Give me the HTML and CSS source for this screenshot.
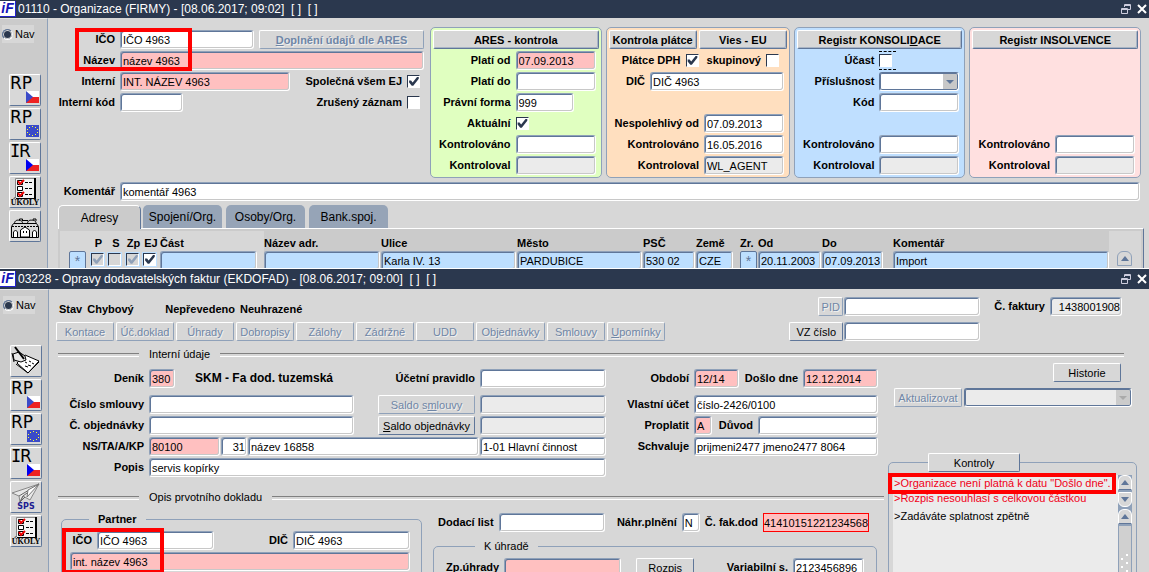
FILE: index.html
```html
<!DOCTYPE html>
<html lang="cs">
  <head>
    <meta charset="UTF-8" />
    <meta name="viewport" content="width=device-width, initial-scale=1.0" />
    <title>Organizace</title>
    <link rel="stylesheet" href="styles.css">
  </head>
  <body>

    <!-- shared icons -->
    <svg class="defs" width="0" height="0">
      <symbol id="flag" viewBox="0 0 13 12">
        <path d="M0 0h13v6H0z" fill="#fff"/>
        <path d="M0 6h13v6H0z" fill="#e22"/>
        <path d="M0 0l7 6-7 6z" fill="currentColor"/>
      </symbol>
      <symbol id="eu" viewBox="0 0 13 12">
        <path d="M0 0h13v12H0z" fill="#3b4bc8"/>
        <path d="M6 1h1v1H6zM9 2h1v1H9zM11 4h1v1h-1zM11 7h1v1h-1zM9 9h1v1H9zM6 10h1v1H6zM3 9h1v1H3zM1 7h1v1H1zM1 4h1v1H1zM3 2h1v1H3z" fill="#ff3"/>
      </symbol>
      <symbol id="list" viewBox="0 0 30 30">
        <path d="M6 1h19v21H6z" fill="#f4f4f4"/>
        <path d="M5.500 21V1.500H25" fill="none" stroke="#888"/>
        <path d="M24 1h2v21H6v-1h18z" fill="#000"/>
        <path d="M7.500 3.500h5v4h-5zM7.500 9.500h5v4h-5zM7.500 15.500h5v4h-5z" fill="#fff" stroke="#000"/>
        <path d="M15 5.500h8M15 11.500h8M15 17.500h8" stroke="#000" stroke-dasharray="3 1"/>
        <path d="M8 4l2 3 4-4M8 16l2 3 4-4" fill="none" stroke="#e00" stroke-width="2"/>
      </symbol>
      <symbol id="town" viewBox="0 0 30 30">
        <path d="M1.500 26.500v-11l2-3h23l2 3v11z" fill="#d8d8d8" stroke="#000"/>
        <path d="M2 15.500h26" stroke="#000" stroke-dasharray="2 1"/>
        <path d="M4.500 12.500c0-3 3-4 5-3M12.500 12.500c0-3-2-3-3-3V8h3v2M17.500 12.500c0-3 3-4 5-3M26 12.500c0-3-2-3-3-3V8h3v2" fill="none" stroke="#000"/>
        <path d="M12 9.500h6" stroke="#000"/>
        <path d="M10.500 26v-7l4.500-3 4.500 3v7z" fill="#fff" stroke="#000"/>
        <path d="M3.500 26v-5l2-2 2 2v5M22.500 26v-5l2-2 2 2v5" fill="#fff" stroke="#000"/>
        <path d="M13 20h1v2h-1zM16 20h1v2h-1zM2 26h26v1H2z"/>
      </symbol>
      <symbol id="note" viewBox="0 0 30 30">
        <path d="M6 17l8-8 14 6-11 12z" fill="#fff" stroke="#000"/>
        <path d="M5 18l12 9 11-11" fill="none" stroke="#000"/>
        <path d="M2 8l6-2 6 4 1 4-5 2-7-2z" fill="#e8e8e8" stroke="#000"/>
        <path d="M4 1l9 12" stroke="#000" stroke-width="2"/>
        <path d="M14 16l2 1M18 15l2 1M17 19l3 1M21 17l2 1M14 20l3 1M1 7l2 9" stroke="#000"/>
      </symbol>
      <symbol id="plane" viewBox="0 0 30 30">
        <path d="M1 11L28 2 19 18l-7-4-3 6-1-6z" fill="#e8e8e8" stroke="#888"/>
        <path d="M28 2L8 14M28 2L12 14l-3 6 5-5" fill="none" stroke="#666"/>
        <path d="M17 8l11-6-12 13z" fill="#fff" stroke="#777"/>
      </symbol>
      <symbol id="restore" viewBox="0 0 10 10">
        <path d="M3.500 3V.500h6v5H7M3 1.500h7" fill="none" stroke="#ccd"/>
        <path d="M.500 4.500h6v5h-6zM0 5.500h7" fill="none" stroke="#ccd"/>
      </symbol>
      <symbol id="close" viewBox="0 0 10 10">
        <path d="M1 1l8 8M9 1L1 9" stroke="#fff" stroke-width="2"/>
      </symbol>
      <symbol id="up" viewBox="0 0 8 5"><path d="M0 5l4-5 4 5z"/></symbol>
      <symbol id="down" viewBox="0 0 8 5"><path d="M0 0l4 5 4-5z"/></symbol>
    </svg>

    <section class="window firmy">
      <header class="titlebar">
        <span class="logo">iF</span>
        <h1>01110 - Organizace (FIRMY) - [08.06.2017; 09:02]&nbsp; [ ]&nbsp; [ ]</h1>
        <button class="win-but" aria-label="Obnovit"><svg width="10" height="10"><use href="#restore"/></svg></button>
        <button class="win-but" aria-label="Zavřít"><svg width="10" height="10"><use href="#close"/></svg></button>
      </header>

      <div class="window-body">
        <nav class="sidebar">
          <label class="nav-radio"><input type="radio" checked>Nav</label>
          <div class="tools">
            <button class="tool">RP<svg class="badge soft"><use href="#flag"/></svg></button>
            <button class="tool">RP<svg class="badge"><use href="#eu"/></svg></button>
            <button class="tool"><span class="mono">I</span>R<svg class="badge"><use href="#flag"/></svg></button>
            <button class="tool"><svg class="pic"><use href="#list"/></svg><span class="caption">ÚKOLY</span></button>
            <button class="tool" aria-label="Adresy"><svg class="pic"><use href="#town"/></svg></button>
          </div>
        </nav>

        <main class="content">
          <div class="top">
            <div class="org">
              <div class="row">
                <label for="ico">IČO</label>
                <input class="field w-ico" id="ico" value="IČO 4963">
                <button class="but bold ares" disabled><u>D</u>oplnění údajů dle ARES</button>
              </div>
              <div class="row">
                <label for="nazev">Název</label>
                <input class="field pink grow" id="nazev" value="název 4963">
              </div>
              <div class="row">
                <label for="interni">Interní</label>
                <input class="field pink w-interni" id="interni" value="INT. NÁZEV 4963">
                <label class="side" for="ej">Společná všem EJ</label>
                <input type="checkbox" id="ej" checked>
              </div>
              <div class="row">
                <label for="kod-int">Interní kód</label>
                <input class="field w-kod" id="kod-int">
                <label class="side" for="zruseny">Zrušený záznam</label>
                <input type="checkbox" id="zruseny">
              </div>
              <div class="mark mark-org"></div>
            </div>

            <div class="panels">
              <div class="panel green">
                <div class="heads"><button class="but bold">ARES - kontrola</button></div>
                <div class="pair"><label for="a1">Platí od</label><input class="field pink" id="a1" value="07.09.2013"></div>
                <div class="pair"><label for="a2">Platí do</label><input class="field" id="a2"></div>
                <div class="pair"><label for="a3">Právní forma</label><input class="field short" id="a3" value="999"></div>
                <div class="pair"><label for="a4">Aktuální</label><input type="checkbox" id="a4" checked></div>
                <div class="pair"><label for="a5">Kontrolováno</label><input class="field" id="a5"></div>
                <div class="pair"><label for="a6">Kontroloval</label><input class="field off" id="a6" readonly></div>
              </div>

              <div class="panel orange">
                <div class="heads"><button class="but bold">Kontrola plátce</button><button class="but bold">Vies - EU</button></div>
                <div class="line checks">
                  <label for="b1">Plátce DPH</label><input type="checkbox" id="b1" checked>
                  <label for="b2">skupinový</label><input type="checkbox" id="b2">
                </div>
                <div class="line"><label for="b3">DIČ</label><input class="field w-dic" id="b3" value="DIČ 4963"></div>
                <div class="pair"></div>
                <div class="pair"><label for="b4">Nespolehlivý od</label><input class="field" id="b4" value="07.09.2013"></div>
                <div class="pair"><label for="b5">Kontrolováno</label><input class="field" id="b5" value="16.05.2016"></div>
                <div class="pair"><label for="b6">Kontroloval</label><input class="field off" id="b6" value="WL_AGENT" readonly></div>
              </div>

              <div class="panel blue">
                <div class="heads"><button class="but bold">Registr KONSOLI<u>D</u>ACE</button></div>
                <div class="pair"><label for="c1">Účast</label><span class="focus"><input type="checkbox" id="c1"></span></div>
                <div class="pair"><label for="c2">Příslušnost</label><select class="field" id="c2"><option></option></select></div>
                <div class="pair"><label for="c3">Kód</label><input class="field" id="c3"></div>
                <div class="pair"></div>
                <div class="pair"><label for="c4">Kontrolováno</label><input class="field" id="c4"></div>
                <div class="pair"><label for="c5">Kontroloval</label><input class="field off" id="c5" readonly></div>
              </div>

              <div class="panel rose">
                <div class="heads"><button class="but bold">Registr INSOLVENCE</button></div>
                <div class="pair"></div>
                <div class="pair"></div>
                <div class="pair"></div>
                <div class="pair"></div>
                <div class="pair"><label for="d1">Kontrolováno</label><input class="field" id="d1"></div>
                <div class="pair"><label for="d2">Kontroloval</label><input class="field off" id="d2" readonly></div>
              </div>
            </div>
          </div>

          <div class="row comment">
            <label for="komentar">Komentář</label>
            <input class="field grow" id="komentar" value="komentář 4963">
          </div>

          <div class="tabs">
            <button class="tab active">Adresy</button>
            <button class="tab">Spojení/Org.</button>
            <button class="tab">Osoby/Org.</button>
            <button class="tab">Bank.spoj.</button>
          </div>
          <div class="tab-page">
            <table class="addresses">
              <colgroup>
                <col class="c-star"><col class="c-p"><col class="c-s"><col class="c-p"><col class="c-s"><col class="c-cast">
                <col class="c-nazev"><col class="c-ulice"><col class="c-mesto"><col class="c-psc"><col class="c-zeme">
                <col class="c-zr"><col class="c-od"><col class="c-do"><col>
              </colgroup>
              <thead>
                <tr>
                  <th class="lite"></th><th class="lite mid">P</th><th class="lite mid">S</th><th class="lite mid">Zp</th><th class="lite mid">EJ</th><th class="lite">Část</th>
                  <th>Název adr.</th><th>Ulice</th><th>Město</th><th>PSČ</th><th>Země</th><th>Zr.</th><th>Od</th><th>Do</th><th>Komentář</th>
                </tr>
              </thead>
              <tbody>
                <tr>
                  <td class="lite star"><button class="but row-but">*</button></td>
                  <td class="lite"><span class="tick"><input type="checkbox" aria-label="P" checked disabled></span></td>
                  <td class="lite"><span class="tick"><input type="checkbox" aria-label="S" disabled></span></td>
                  <td class="lite"><span class="tick"><input type="checkbox" aria-label="Zp" checked disabled></span></td>
                  <td class="lite"><span class="tick"><input type="checkbox" aria-label="EJ" checked></span></td>
                  <td class="lite gap-7"><input class="field sky" aria-label="Část"></td>
                  <td><input class="field sky" aria-label="Název adr."></td>
                  <td><input class="field sky" aria-label="Ulice" value="Karla IV. 13"></td>
                  <td><input class="field sky" aria-label="Město" value="PARDUBICE"></td>
                  <td><input class="field sky" aria-label="PSČ" value="530 02"></td>
                  <td class="gap-7"><input class="field sky" aria-label="Země" value="CZE"></td>
                  <td><button class="but row-but">*</button></td>
                  <td><input class="field sky" aria-label="Od" value="20.11.2003"></td>
                  <td class="gap-10"><input class="field sky" aria-label="Do" value="07.09.2013"></td>
                  <td class="last"><input class="field sky" aria-label="Komentář" value="Import"></td>
                </tr>
              </tbody>
            </table>
            <div class="table-scroll">
              <button class="scroll-but top-but" aria-label="Nahoru"><svg width="8" height="5"><use href="#up"/></svg></button>
            </div>
          </div>
        </main>
      </div>
    </section>

    <section class="window faktury">
      <header class="titlebar">
        <span class="logo">iF</span>
        <h1>03228 - Opravy dodavatelských faktur (EKDOFAD) - [08.06.2017; 09:00]&nbsp; [ ]&nbsp; [ ]</h1>
        <button class="win-but" aria-label="Obnovit"><svg width="10" height="10"><use href="#restore"/></svg></button>
        <button class="win-but" aria-label="Zavřít"><svg width="10" height="10"><use href="#close"/></svg></button>
      </header>

      <div class="window-body">
        <nav class="sidebar">
          <label class="nav-radio"><input type="radio" checked>Nav</label>
          <div class="tools">
            <button class="tool" aria-label="Zápis"><svg class="pic"><use href="#note"/></svg></button>
            <button class="tool">RP<svg class="badge soft"><use href="#flag"/></svg></button>
            <button class="tool">RP<svg class="badge"><use href="#eu"/></svg></button>
            <button class="tool"><span class="mono">I</span>R<svg class="badge"><use href="#flag"/></svg></button>
            <button class="tool"><svg class="pic"><use href="#plane"/></svg><span class="caption sps">SPS</span></button>
            <button class="tool"><svg class="pic"><use href="#list"/></svg><span class="caption">ÚKOLY</span></button>
          </div>
        </nav>

        <main class="content">
          <div class="invoice-head">
            <div class="head-left">
              <p class="status"><b>Stav</b><b class="state">Chybový</b><b>Nepřevedeno</b><b>Neuhrazené</b></p>
              <div class="actions">
                <button class="but" disabled>Kontace</button>
                <button class="but" disabled>Úč.doklad</button>
                <button class="but" disabled>Úhrady</button>
                <button class="but" disabled>Dobropisy</button>
                <button class="but" disabled>Zálohy</button>
                <button class="but" disabled>Zádržné</button>
                <button class="but" disabled>UDD</button>
                <button class="but wide" disabled>Objednávky</button>
                <button class="but" disabled>Smlouvy</button>
                <button class="but" disabled><u>U</u>pomínky</button>
              </div>
            </div>
            <div class="head-right">
              <button class="but pid" disabled>PID</button>
              <input class="field" aria-label="PID">
              <div class="number"><label for="cislo">Č. faktury</label><input class="field off num" id="cislo" value="1438001908" readonly></div>
              <button class="but">VZ číslo</button>
              <input class="field" aria-label="VZ číslo">
            </div>
          </div>

          <div class="divider"><span>Interní údaje</span></div>

          <div class="invoice">
            <div class="invoice-main">
              <div class="forms">
                <div class="form-left">
                  <div class="row first">
                    <label for="denik">Deník</label>
                    <input class="field pink w-25" id="denik" value="380">
                    <b class="denik-name">SKM - Fa dod. tuzemská</b>
                    <label class="side" for="pravidlo">Účetní pravidlo</label>
                    <input class="field w-125" id="pravidlo">
                  </div>
                  <div class="row">
                    <label for="smlouva">Číslo smlouvy</label>
                    <input class="field w-204" id="smlouva">
                    <button class="but saldo" disabled>Saldo s<u>m</u>louvy</button>
                    <input class="field off w-125" aria-label="Saldo smlouvy" readonly>
                  </div>
                  <div class="row">
                    <label for="objednavka">Č. objednávky</label>
                    <input class="field w-204" id="objednavka">
                    <button class="but saldo"><u>S</u>aldo objednávky</button>
                    <input class="field off w-125" aria-label="Saldo objednávky" readonly>
                  </div>
                  <div class="row tight">
                    <label for="ns">NS/TA/A/KP</label>
                    <input class="field pink w-70" id="ns" value="80100">
                    <input class="field num w-25" aria-label="TA" value="31">
                    <input class="field grow" aria-label="A" value="název 16858">
                    <input class="field w-125" aria-label="KP" value="1-01 Hlavní činnost">
                  </div>
                  <div class="row">
                    <label for="popis">Popis</label>
                    <input class="field grow" id="popis" value="servis kopírky">
                  </div>
                </div>

                <div class="form-mid">
                  <div class="row first">
                    <label for="obdobi">Období</label>
                    <input class="field pink w-44" id="obdobi" value="12/14">
                    <label class="side" for="doslo">Došlo dne</label>
                    <input class="field pink w-74" id="doslo" value="12.12.2014">
                  </div>
                  <div class="row">
                    <label for="ucet">Vlastní účet</label>
                    <input class="field grow" id="ucet" value="číslo-2426/0100">
                  </div>
                  <div class="row">
                    <label for="proplatit">Proplatit</label>
                    <input class="field pink w-17" id="proplatit" value="A">
                    <label class="side" for="duvod">Důvod</label>
                    <input class="field w-119" id="duvod">
                  </div>
                  <div class="row">
                    <label for="schvaluje">Schvaluje</label>
                    <input class="field grow" id="schvaluje" value="prijmeni2477 jmeno2477 8064">
                  </div>
                </div>
              </div>

              <div class="divider"><span>Opis prvotního dokladu</span></div>

              <div class="origin">
                <fieldset class="partner">
                  <legend><b>Partner</b></legend>
                  <div class="row">
                    <label for="p-ico">IČO</label>
                    <input class="field w-116" id="p-ico" value="IČO 4963">
                    <label class="side" for="p-dic">DIČ</label>
                    <input class="field w-116" id="p-dic" value="DIČ 4963">
                  </div>
                  <div class="row">
                    <input class="field pink grow" aria-label="Název partnera" value="int. název 4963">
                  </div>
                  <div class="mark mark-partner"></div>
                </fieldset>

                <div class="payment">
                  <div class="row delivery">
                    <label for="dodaci">Dodací list</label>
                    <input class="field w-106" id="dodaci">
                    <label class="side" for="plneni">Náhr.plnění</label>
                    <input class="field w-17" id="plneni" value="N">
                    <label for="fakdod">Č. fak.dod</label>
                    <input class="field pink alert w-106" id="fakdod" value="41410151221234568">
                  </div>
                  <fieldset class="due">
                    <legend>K úhradě</legend>
                    <div class="row">
                      <label for="zp">Zp.úhrady</label>
                      <input class="field pink w-116" id="zp">
                      <button class="but rozpis">Rozpis</button>
                      <label class="side" for="vs">Variabilní s.</label>
                      <input class="field w-70" id="vs" value="2123456896">
                    </div>
                  </fieldset>
                </div>
              </div>
            </div>

            <aside class="checks-side">
              <button class="but historie">Historie</button>
              <div class="update">
                <button class="but" disabled>Aktualizovat</button>
                <select class="field off" aria-label="Aktualizovat" disabled><option></option></select>
              </div>
              <fieldset class="kontroly">
                <legend><button class="but">Kontroly</button></legend>
                <div class="list">
                  <ul>
                    <li class="error">&gt;Organizace není platná k datu "Došlo dne".</li>
                    <li class="error">&gt;Rozpis nesouhlasí s celkovou částkou</li>
                    <li class="info">&gt;Zadáváte splatnost zpětně</li>
                  </ul>
                  <div class="scrollbar">
                    <button class="scroll-but top-but" aria-label="O řádek výš"><svg width="8" height="5"><use href="#up"/></svg></button>
                    <button class="scroll-but" aria-label="O řádek níž"><svg width="8" height="5"><use href="#down"/></svg></button>
                    <button class="scroll-but top-but" aria-label="Nahoru"><svg width="8" height="5"><use href="#up"/></svg></button>
                    <div class="track"><svg width="12" height="48" fill="#fff"><path d="M7 28h2v2H7zM2 32h2v2H2zM7 36h2v2H7zM2 40h2v2H2zM7 44h2v2H7z"/></svg></div>
                  </div>
                  <div class="mark mark-error"></div>
                </div>
              </fieldset>
            </aside>
          </div>
        </main>
      </div>
    </section>
  </body>
</html>
```
FILE: styles.css
```css
* {
  box-sizing: border-box;
}
body {
  margin: 0;
  height: 100vh;
  display: flex;
  flex-direction: column;
  overflow: hidden;
  background-color: #d7d7d7;
  color: #000;
  font-family: "Liberation Sans", Arial, sans-serif;
  font-size: 11px;
  line-height: 13px;
}
button,
input,
select {
  font: inherit;
  color: inherit;
  margin: 0;
}
.defs {
  position: absolute;
}

/* windows */
.window {
  display: flex;
  flex-direction: column;
  overflow: hidden;
}
.firmy {
  flex: none;
  height: 269px;
  border-bottom: 1px solid #fff;
}
.faktury {
  flex: 1;
}
.titlebar {
  flex: none;
  display: flex;
  align-items: center;
  gap: 6px;
  height: 18px;
  padding-right: 2px;
  background-color: #2b384e;
  color: #fff;
}
.faktury .titlebar {
  height: 20px;
}
.titlebar h1 {
  flex: 1;
  margin: 0 0 0 -4px;
  font-size: 12px;
  line-height: 15px;
  font-weight: normal;
}
.logo {
  width: 16px;
  height: 16px;
  background-color: #fff;
  border-bottom: 1px solid #22c;
  border-right: 1px solid #22c;
  color: #1414b8;
  font-size: 14px;
  font-weight: bold;
  font-style: italic;
  line-height: 15px;
  text-align: center;
}
.win-but {
  display: flex;
  padding: 0;
  border: none;
  background: none;
}
.window-body {
  flex: 1;
  display: flex;
  min-height: 0;
}
.content {
  flex: 1;
  min-width: 0;
}

/* sidebar */
.sidebar {
  flex: none;
  width: 48px;
  padding: 6px 0 0 2px;
  background-color: #cbcbcb;
  border-right: 1px solid #8fa1b9;
  border-top: 1px solid #e4e4e4;
}
.nav-radio {
  display: flex;
  align-items: center;
  gap: 2px;
  width: 32px;
  height: 18px;
  background-color: #d7d7d7;
}
.nav-radio input {
  appearance: none;
  flex: none;
  width: 11px;
  height: 11px;
  border: 1px solid #fff;
  border-top-color: #5f7699;
  border-left-color: #5f7699;
  border-radius: 50%;
  background-color: #2b384e;
  box-shadow: inset 0 0 0 1px #d7d7d7;
}
.tools {
  display: flex;
  flex-direction: column;
  gap: 2px;
  padding: 31px 0 0 7px;
}
.tool {
  display: grid;
  grid-template-columns: auto 1fr;
  align-content: start;
  justify-items: start;
  width: 32px;
  height: 32px;
  padding: 0;
  border: 1px solid #5f7699;
  border-top-color: #fff;
  border-left-color: #fff;
  border-radius: 2px;
  background-color: #d8d8d8;
  font-family: "DejaVu Sans", sans-serif;
  font-size: 17px;
  line-height: 16px;
}
.mono {
  width: 9px;
  font-family: "DejaVu Sans Mono", monospace;
}
.badge {
  grid-column: 1 / -1;
  justify-self: end;
  width: 13px;
  height: 12px;
  margin-right: 1px;
  color: #0000f0;
}
.soft {
  color: #3b4bc8;
}
.pic,
.caption {
  grid-row: 1;
  grid-column: 1 / -1;
}
.pic {
  width: 30px;
  height: 30px;
}
.caption {
  place-self: end center;
  font-family: "Liberation Serif", serif;
  font-size: 8px;
  font-weight: bold;
  line-height: 8px;
}
.sps {
  color: #1c1c90;
  font-family: "DejaVu Sans", sans-serif;
  line-height: 10px;
}
.faktury .sidebar {
  width: 49px;
  padding-left: 3px;
}

/* controls */
.field {
  width: 100%;
  min-width: 0;
  height: 19px;
  padding: 1px 1px 0 2px;
  border: 1px solid #fff;
  border-top-color: #8fa1b9;
  border-left-color: #8fa1b9;
  border-radius: 3px;
  box-shadow: inset 1px 1px #5f7699, inset -1px -1px #c8c8c8;
  background-color: #fff;
  outline: none;
}
.pink {
  background-color: #ffc0c0;
}
.sky {
  background-color: #bddfff;
}
.off {
  background-color: #ebebeb;
}
.num {
  text-align: right;
}
.alert {
  border: 1px solid #f00;
  border-radius: 0;
  box-shadow: none;
  padding-left: 0;
  padding-right: 0;
}
select.field {
  appearance: none;
  border-color: #5f7699 #fff #fff #5f7699;
  box-shadow: inset 0 0 0 1px #5f7699;
  background-image: url("data:image/svg+xml,%3Csvg xmlns='http://www.w3.org/2000/svg' width='14' height='15'%3E%3Cpath d='M0 0h14v15H0z' fill='%23c8c8c8'/%3E%3Cpath d='M3 6h8l-4 4z' fill='%235f7699'/%3E%3C/svg%3E");
  background-repeat: no-repeat;
  background-position: right 1px center;
  opacity: 1;
}
select.off {
  background-image: url("data:image/svg+xml,%3Csvg xmlns='http://www.w3.org/2000/svg' width='14' height='15'%3E%3Cpath d='M0 0h14v15H0z' fill='%23cbcbcb'/%3E%3Cpath d='M3 6h8l-4 4z' fill='%23aaaaaa'/%3E%3C/svg%3E");
}
.but {
  height: 19px;
  padding: 1px 2px 0;
  border: 1px solid #5f7699;
  border-top-color: #fff;
  border-left-color: #fff;
  border-radius: 2px;
  background-color: #d7d7d7;
  white-space: nowrap;
}
.but:disabled {
  color: #6f86a6;
  text-shadow: 1px 1px #f0f0f0;
  border-right-color: #8fa1b9;
  border-bottom-color: #8fa1b9;
}
.bold,
label {
  font-weight: bold;
  white-space: nowrap;
}
.bold {
  box-shadow: inset -1px -1px #a9b4c4;
}
.bold:disabled {
  box-shadow: none;
}
.nav-radio {
  font-weight: normal;
}
input[type="checkbox"] {
  appearance: none;
  flex: none;
  width: 13px;
  height: 13px;
  border: 1px solid #fff;
  border-top-color: #2b384e;
  border-left-color: #2b384e;
  background-color: #fff;
}
input[type="checkbox"]:checked::before {
  content: "";
  display: block;
  height: 100%;
  background-color: #2b384e;
  clip-path: polygon(10% 40%, 28% 40%, 42% 60%, 82% 8%, 98% 8%, 98% 26%, 48% 88%, 34% 88%, 10% 60%);
}
input[type="checkbox"]:disabled {
  background-color: #d7d7d7;
}
input[type="checkbox"]:disabled::before {
  background-color: #8fa1b9;
}
.row {
  display: flex;
  align-items: center;
  gap: 5px;
  height: 19px;
}
.row .field {
  flex: none;
}
.row .grow {
  flex: 1;
}
.row label {
  text-align: right;
}
.row .side {
  flex: 1;
}

/* red highlight frames */
.mark {
  position: absolute;
  border: 4px solid #f00;
  pointer-events: none;
}
.mark-org {
  left: 27px;
  top: 1px;
  width: 117px;
  height: 43px;
}
.mark-partner {
  left: 0;
  top: 2px;
  width: 102px;
  height: 46px;
}
.mark-error {
  left: -5px;
  top: -2px;
  width: 228px;
  height: 21px;
}

/* organization */
.top {
  display: flex;
  gap: 6px;
  padding: 9px 8px 0 0;
}
.org {
  flex: none;
  position: relative;
  display: flex;
  flex-direction: column;
  gap: 2px;
  width: 376px;
  padding-top: 3px;
}
.org .row > label:first-child,
.comment label {
  flex: none;
  width: 67px;
}
.org input[type="checkbox"] {
  margin-right: 4px;
}
.w-ico {
  width: 134px;
}
.org .row .ares {
  flex: 1;
}
.w-interni {
  width: 170px;
}
.w-kod {
  width: 63px;
}
.panels {
  flex: 1;
  display: grid;
  grid-template-columns: 172fr 185fr 172fr 172fr;
  gap: 4px;
}
.panel {
  display: flex;
  flex-direction: column;
  gap: 2px;
  min-width: 0;
  padding: 2px;
  border: 1px solid #8fa1b9;
  border-radius: 5px;
}
.green {
  background-color: #e0ffc0;
}
.orange {
  background-color: #ffdfbf;
}
.blue {
  background-color: #bfdfff;
}
.rose {
  background-color: #ffe0e0;
}
.heads {
  display: flex;
  gap: 2px;
}
.heads .but {
  flex: 1;
}
.pair {
  display: grid;
  grid-template-columns: 1fr 80px;
  gap: 5px;
  align-items: center;
  height: 19px;
  padding-right: 3px;
}
.pair label {
  text-align: right;
}
.short {
  width: 58px;
}
.line {
  display: flex;
  justify-content: flex-end;
  align-items: center;
  gap: 5px;
  height: 19px;
  padding-right: 3px;
}
.checks {
  padding-right: 8px;
}
.checks input + label {
  margin-left: 3px;
}
.w-dic {
  width: 134px;
}
.focus {
  display: flex;
  width: 17px;
  height: 19px;
  padding-top: 2px;
  border-top: 1px dashed #000;
  border-bottom: 1px dashed #000;
}
.comment {
  padding: 0 9px 0 0;
  margin-top: 4px;
}

/* tabs */
.tabs {
  display: flex;
  gap: 4px;
  margin: 4px 6px 0 10px;
  height: 23px;
}
.tab {
  width: 79px;
  padding: 2px 0 0;
  border: none;
  border-radius: 5px 5px 0 0;
  background-color: #96a4b7;
  font-size: 12px;
}
.tab.active {
  width: 83px;
  margin-bottom: -1px;
  border: 1px solid #fff;
  border-right-color: #5f7699;
  border-bottom: none;
  background-color: #cbcbcb;
}
.tab:nth-child(2) {
  margin-left: -2px;
}
.tab-page {
  display: flex;
  margin: 0 5px 0 10px;
  padding: 2px 2px 0;
  background-color: #cbcbcb;
  border-top: 1px solid #fff;
  border-right: 1px solid #5f7699;
}
.addresses {
  flex: 1;
  table-layout: fixed;
  border-collapse: collapse;
  width: 100%;
}
.addresses th {
  height: 20px;
  padding: 6px 0 1px;
  text-align: left;
}
.addresses .mid {
  text-align: center;
}
.addresses td {
  padding: 0 1px 0 0;
}
.addresses .last {
  padding: 0;
}
.addresses .field {
  display: block;
}
.addresses .star {
  padding-left: 9px;
}
.addresses .gap-7 {
  padding-right: 7px;
}
.addresses .gap-10 {
  padding-right: 10px;
}
.lite {
  background-color: #d7d7d7;
}
.c-star { width: 30px; }
.c-p { width: 17px; }
.c-s { width: 18px; }
.c-cast { width: 104px; }
.c-nazev { width: 117px; }
.c-ulice { width: 136px; }
.c-mesto { width: 126px; }
.c-psc { width: 53px; }
.c-zeme { width: 44px; }
.c-zr { width: 18px; }
.c-od { width: 64px; }
.c-do { width: 71px; }
.row-but {
  display: block;
  width: 17px;
  background-color: #bddfff;
  border-color: #5f7699;
  color: #5f7699;
  font-size: 14px;
}
.tick {
  display: flex;
  width: 15px;
  height: 15px;
  margin-bottom: 2px;
  padding: 1px;
  background-color: #bddfff;
}
.table-scroll {
  flex: none;
  width: 32px;
  padding: 20px 0 0 8px;
  background-color: #d7d7d7;
}
.scroll-but {
  display: flex;
  align-items: center;
  justify-content: center;
  width: 14px;
  height: 15px;
  padding: 0;
  border: 1px solid #fff;
  border-radius: 0 0 6px 6px;
  background-color: #d7d7d7;
  color: #5f7699;
}
.scroll-but svg {
  fill: currentColor;
}
.top-but {
  border-radius: 6px 6px 0 0;
  border-bottom-color: #5f7699;
}
.table-scroll .scroll-but {
  width: 15px;
  border-color: #8fa1b9;
}

/* invoice */
.invoice-head {
  display: flex;
  justify-content: space-between;
  padding: 8px 27px 0 7px;
}
.head-left,
.head-right {
  display: grid;
  grid-template-rows: 19px 19px;
  row-gap: 6px;
}
.status {
  display: flex;
  align-self: end;
  gap: 5px;
  margin: 0 0 0 3px;
}
.state {
  width: 73px;
}
.actions {
  display: flex;
  gap: 2px;
}
.actions .but {
  width: 58px;
}
.actions .wide {
  width: 69px;
}
.head-right {
  grid-template-columns: 54px 136px auto;
  column-gap: 1px;
}
.pid {
  justify-self: end;
  width: 25px;
}
.number {
  display: flex;
  align-items: center;
  gap: 5px;
  padding-left: 13px;
}
.number .field {
  width: 72px;
}
.divider {
  display: flex;
  align-items: center;
  gap: 10px;
  margin: 7px 25px 0 9px;
}
.divider::before,
.divider::after {
  content: "";
  height: 2px;
  border-top: 1px solid #808080;
  border-bottom: 1px solid #fff;
}
.divider::before {
  width: 81px;
}
.divider::after {
  flex: 1;
}
.invoice {
  display: flex;
  gap: 4px;
  padding: 1px 12px 0 7px;
}
.invoice-main {
  flex: 1;
  min-width: 0;
}
.invoice-main .divider {
  margin: 14px 0 0 2px;
}
.forms {
  display: flex;
  gap: 15px;
  padding: 7px 6px 0 0;
}
.form-left,
.form-mid {
  display: flex;
  flex-direction: column;
  gap: 2px;
}
.form-left {
  flex: 1;
  min-width: 0;
}
.form-mid {
  flex: none;
  width: 257px;
}
.first {
  margin-bottom: 5px;
}
.form-left .row > label:first-child {
  width: 88px;
}
.form-mid .row > label:first-child {
  width: 68px;
}
.denik-name {
  margin-left: 15px;
  font-size: 12px;
}
.tight {
  gap: 1px;
}
.tight label {
  margin-right: 4px;
}
.saldo {
  width: 97px;
  margin-left: auto;
}
.w-17 { width: 18px; }
.w-25 { width: 26px; }
.w-44 { width: 45px; }
.w-70 { width: 71px; }
.w-74 { width: 75px; }
.w-106 { width: 106px; }
.w-116 { width: 117px; }
.w-119 { width: 120px; }
.w-125 { width: 126px; }
.w-204 { width: 205px; }

fieldset {
  min-width: 0;
  margin: 0;
  padding: 0;
  border: 1px solid #8fa1b9;
  border-radius: 5px;
}
legend {
  height: 13px;
  padding: 0 9px;
}
.origin {
  display: flex;
  gap: 11px;
  padding: 9px 7px 0 5px;
}
.partner {
  position: relative;
  flex: 1;
  height: 90px;
  padding: 5px 11px 0 8px;
}
.partner legend {
  margin-left: 19px;
}
.partner .row {
  margin-bottom: 2px;
}
.partner .row > label:first-child {
  width: 22px;
}
.payment {
  flex: none;
  width: 444px;
}
.delivery {
  padding: 0 8px 0 5px;
}
.due {
  height: 60px;
  margin-top: 8px;
  padding: 5px 12px 0 12px;
}
.due legend {
  margin-left: 29px;
}
.rozpis {
  width: 58px;
  margin-left: 10px;
}

/* right column */
.checks-side {
  flex: none;
  display: flex;
  flex-direction: column;
  width: 249px;
  padding-top: 1px;
}
.historie {
  align-self: flex-end;
  width: 68px;
  margin-right: 16px;
}
.update {
  display: flex;
  gap: 2px;
  margin: 6px 5px 0 6px;
}
.update .but {
  width: 68px;
}
.update select {
  flex: 1;
}
.kontroly {
  margin-top: 46px;
  padding: 3px 4px 0;
}
.kontroly legend {
  height: 19px;
  margin-left: 35px;
  padding: 0;
}
.kontroly .but {
  display: block;
  width: 92px;
}
.list {
  position: relative;
  display: flex;
  height: 130px;
}
.list ul {
  flex: 1;
  margin: 0;
  padding: 1px 1px;
  list-style: none;
  background-color: #ebebeb;
  line-height: 15px;
  white-space: nowrap;
}
.error {
  color: #f00018;
}
.info {
  margin-top: 3px;
}
.scrollbar {
  width: 14px;
  background-color: #8fa1b9;
}
.scrollbar .scroll-but {
  margin-bottom: 2px;
}
.track {
  height: 80px;
  margin: 0 1px;
  background-color: #d0d0d0;
}
```
